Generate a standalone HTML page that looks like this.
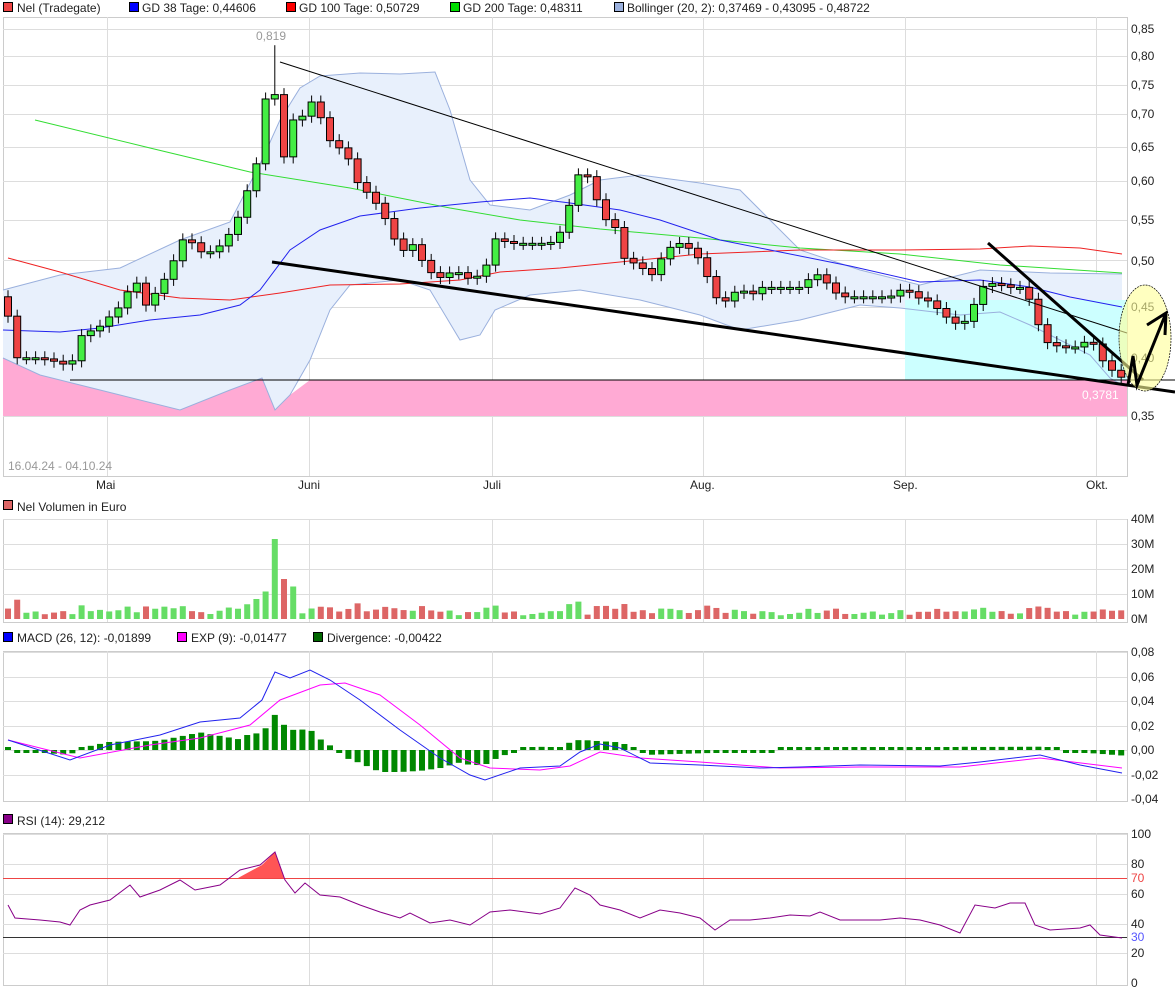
<!DOCTYPE html>
<html><head><meta charset="utf-8"><style>
body{margin:0;background:#fff;width:1175px;height:994px;overflow:hidden;font-family:"Liberation Sans",sans-serif}
svg{display:block}
text{font-family:"Liberation Sans",sans-serif;font-size:12px;fill:#222}
</style></head><body>
<svg id="s" width="1175" height="994" viewBox="0 0 1175 994" xmlns="http://www.w3.org/2000/svg">
<g id="bg"></g>
<!-- legends -->
<rect x="3.5" y="2.5" width="9" height="9" fill="#e44" stroke="#000"/><text x="17" y="12">Nel (Tradegate)</text>
<rect x="129.5" y="2.5" width="9" height="9" fill="#00f" stroke="#000"/><text x="142" y="12">GD 38 Tage: 0,44606</text>
<rect x="286.5" y="2.5" width="9" height="9" fill="#f00" stroke="#000"/><text x="299" y="12">GD 100 Tage: 0,50729</text>
<rect x="450.5" y="2.5" width="9" height="9" fill="#0d0" stroke="#000"/><text x="463" y="12">GD 200 Tage: 0,48311</text>
<rect x="614.5" y="2.5" width="9" height="9" fill="#9ab0dd" stroke="#000"/><text x="627" y="12">Bollinger (20, 2): 0,37469 - 0,43095 - 0,48722</text>
<rect x="3.5" y="500.5" width="9" height="9" fill="#d66" stroke="#000"/><text x="17" y="511">Nel Volumen in Euro</text>
<rect x="3.5" y="632.5" width="9" height="9" fill="#00f" stroke="#000"/><text x="17" y="642">MACD (26, 12): -0,01899</text>
<rect x="177.5" y="632.5" width="9" height="9" fill="#f0f" stroke="#000"/><text x="191" y="642">EXP (9): -0,01477</text>
<rect x="313.5" y="632.5" width="9" height="9" fill="#060" stroke="#000"/><text x="327" y="642">Divergence: -0,00422</text>
<rect x="3.5" y="814.5" width="9" height="9" fill="#808" stroke="#000"/><text x="17" y="825">RSI (14): 29,212</text>
<!-- axis labels -->
<g font-size="12">
<text x="1131" y="33">0,85</text><text x="1131" y="60">0,80</text><text x="1131" y="89">0,75</text><text x="1131" y="118">0,70</text><text x="1131" y="151">0,65</text><text x="1131" y="185">0,60</text><text x="1131" y="224">0,55</text><text x="1131" y="265">0,50</text><text x="1131" y="311">0,45</text><text x="1131" y="362">0,40</text><text x="1131" y="420">0,35</text>
<text x="96" y="489">Mai</text><text x="298" y="489">Juni</text><text x="483" y="489">Juli</text><text x="690" y="489">Aug.</text><text x="893" y="489">Sep.</text><text x="1086" y="489">Okt.</text>
<text x="8" y="470" fill="#999" style="fill:#999">16.04.24 - 04.10.24</text>
<text x="256" y="40" style="fill:#999">0,819</text>
<text x="1131" y="523">40M</text><text x="1131" y="548">30M</text><text x="1131" y="573">20M</text><text x="1131" y="598">10M</text><text x="1131" y="623">0M</text>
<text x="1131" y="656">0,08</text><text x="1131" y="681">0,06</text><text x="1131" y="705">0,04</text><text x="1131" y="730">0,02</text><text x="1131" y="754">0,00</text><text x="1131" y="779">-0,02</text><text x="1131" y="803">-0,04</text>
<text x="1131" y="838">100</text><text x="1131" y="868">80</text><text x="1131" y="882" style="fill:#e44">70</text><text x="1131" y="898">60</text><text x="1131" y="928">40</text><text x="1131" y="941" style="fill:#55f">30</text><text x="1131" y="957">20</text><text x="1131" y="987">0</text>
</g>
<g id="fg"></g>
</svg>
<script>
var NS="http://www.w3.org/2000/svg";
function el(p,t,a){var e=document.createElementNS(NS,t);for(var k in a)e.setAttribute(k,a[k]);document.getElementById(p).appendChild(e);return e;}
function interp(pts,x){if(x<=pts[0][0])return pts[0][1];for(var i=1;i<pts.length;i++){if(x<=pts[i][0]){var a=pts[i-1],b=pts[i];return a[1]+(b[1]-a[1])*(x-a[0])/(b[0]-a[0]);}}return pts[pts.length-1][1];}
function py(p){return 29+(-Math.log(p)-0.1625)*436.1;}
function path(pts,f){return pts.map(function(q,i){return (i?"L":"M")+q[0]+","+(f?f(q[1]):q[1]);}).join("");}
// panels & grid
var vx=[107,309,492,703,905,1096];
function panel(y0,y1,hs){el("bg","rect",{x:3.5,y:y0+.5,width:1124,height:y1-y0,fill:"#fff",stroke:"#ccc"});
hs.forEach(function(h){el("bg","line",{x1:3,x2:1127,y1:h+.5,y2:h+.5,stroke:"#ddd"});});
vx.forEach(function(v){el("bg","line",{x1:v+.5,x2:v+.5,y1:y0,y2:y1,stroke:"#ddd"});});}
panel(17,476,[29,56,85,114,147,181,220,260,307,358,416]);
panel(519,622,[519,544,569,594]);
panel(651,801,[652,677,701,726,750,775]);
panel(833,985,[834,864,894,924,953]);
// bollinger
var up=[[3,290],[60,275],[120,268],[180,240],[230,222],[262,160],[280,120],[300,88],[320,76],[360,73],[400,74],[435,72],[450,110],[470,180],[490,205],[530,210],[570,195],[600,180],[640,175],[700,183],[740,190],[770,220],[800,250],[860,270],[920,285],[980,270],[1050,273],[1122,274]];
var lo=[[3,358],[40,375],[80,385],[120,395],[180,410],[230,390],[262,378],[275,410],[290,395],[310,360],[330,310],[350,285],[400,280],[430,290],[445,315],[460,340],[480,335],[495,310],[530,295],[580,290],[640,300],[700,315],[740,330],[800,320],[860,305],[900,308],[960,315],[1000,312],[1030,325],[1060,340],[1090,355],[1110,378],[1122,385]];
var pk=[[3,358],[40,375],[80,385],[120,395],[180,410],[230,390],[262,378],[275,410],[290,395],[310,380],[1127,380]];
el("bg","path",{d:path(pk)+"L1127,416L3,416Z",fill:"#ffaad4"});
el("bg","path",{d:path(up)+"L"+lo.slice().reverse().map(function(q){return q[0]+","+q[1]}).join("L")+"Z",fill:"#e8f0fc"});
el("bg","path",{d:"M905,300L1127,300L1127,380L905,380Z",fill:"#ccffff"});
el("bg","path",{d:path(up),fill:"none",stroke:"#9ab0dd"});
el("bg","path",{d:path(lo),fill:"none",stroke:"#9ab0dd"});
// MAs
el("bg","path",{d:path([[35,120],[150,148],[250,172],[350,188],[450,208],[520,220],[600,229],[700,238],[800,248],[900,254],[1000,265],[1122,273]]),fill:"none",stroke:"#3d3"});
el("bg","path",{d:path([[8,258],[60,272],[120,290],[180,298],[230,300],[280,293],[330,285],[400,284],[460,280],[500,272],[560,268],[620,262],[700,254],[800,250],[900,250],[980,249],[1030,246],[1080,248],[1122,254]]),fill:"none",stroke:"#e22"});
el("bg","path",{d:path([[3,330],[60,332],[100,328],[150,320],[200,315],[240,305],[260,290],[290,250],[320,230],[360,216],[420,208],[480,202],[530,198],[570,203],[620,210],[660,220],[720,240],[780,252],[850,266],[920,282],[980,280],[1030,287],[1070,297],[1122,307]]),fill:"none",stroke:"#22e"});
// candles
var kp=[[8,.44],[15,.40],[40,.40],[62,.395],[70,.39],[80,.42],[100,.43],[120,.45],[135,.48],[145,.45],[160,.47],[170,.49],[185,.53],[200,.51],[215,.51],[235,.54],[245,.58],[255,.61],[262,.68],[271,.79],[282,.62],[292,.69],[300,.69],[312,.72],[322,.69],[332,.65],[345,.645],[356,.60],[370,.58],[382,.56],[392,.53],[402,.51],[412,.52],[422,.50],[432,.485],[442,.48],[455,.49],[465,.48],[475,.48],[485,.49],[497,.53],[507,.52],[520,.52],[535,.52],[550,.52],[565,.54],[575,.605],[585,.615],[595,.58],[605,.55],[615,.54],[625,.50],[640,.495],[650,.48],[660,.50],[670,.515],[680,.52],[695,.51],[708,.48],[720,.45],[730,.46],[740,.47],[750,.46],[760,.47],[780,.47],[800,.47],[810,.48],[820,.485],[830,.47],[840,.46],[850,.46],[870,.46],[890,.46],[905,.47],[915,.46],[930,.455],[945,.44],[960,.43],[970,.44],[980,.47],[995,.475],[1010,.47],[1025,.47],[1035,.44],[1045,.415],[1060,.41],[1080,.41],[1090,.42],[1100,.40],[1110,.39],[1122,.382]];
var prev=.46,vols=[],ups=[];
for(var i=0;i<122;i++){var x=8+i*9.2,c=interp(kp,x),o=prev;prev=c;
var u=c>=o;ups.push(u);var t=py(Math.max(o,c)),b=py(Math.min(o,c));if(b-t<2){b=t+2;}
var hi=py(Math.max(o,c)*1.015),lw=py(Math.min(o,c)*0.985);
if(i==29){hi=py(.819);}
el("fg","line",{x1:x,x2:x,y1:hi,y2:lw,stroke:"#000"});
el("fg","rect",{x:x-3.5,y:t,width:7,height:b-t,fill:u?"#4e4":"#e44",stroke:"#000","stroke-width":1});
var v=1.5+Math.abs(Math.log(c/o))*60+((i*37)%7)*0.25;
if(x>255&&x<300){v=[8,11,32,16,13,9][Math.round((x-255)/9.2)]||8;}
vols.push([x,v,u]);}
vols.forEach(function(q){var h=Math.min(q[1],40)*2.5;el("fg","rect",{x:q[0]-3,y:619-h,width:6,height:h,fill:q[2]?"#6d6":"#d66"});});
// trend lines
el("fg","line",{x1:280,y1:62,x2:1127,y2:333,stroke:"#000"});
el("fg","line",{x1:272,y1:262,x2:1175,y2:392,stroke:"#000","stroke-width":3});
el("fg","line",{x1:70,y1:380,x2:1175,y2:380,stroke:"#000"});
el("fg","line",{x1:988,y1:243,x2:1143,y2:380,stroke:"#000","stroke-width":3});
el("fg","ellipse",{cx:1145,cy:338,rx:26,ry:53,fill:"rgba(255,255,150,.6)",stroke:"#000","stroke-width":.7,"stroke-dasharray":"2,1"});
el("fg","path",{d:"M1128,385L1133,356L1137,385L1166,313M1147,325L1166,313L1165,335",fill:"none",stroke:"#000","stroke-width":3});
var tx=el("fg","text",{x:1082,y:399,style:"fill:#fff"});tx.textContent="0,3781";
// MACD
var bl=[[8,740],[70,760],[110,745],[160,735],[200,722],[240,718],[262,700],[275,672],[290,678],[310,670],[330,680],[360,700],[400,730],[440,758],[470,775],[485,780],[520,768],[560,766],[580,752],[600,744],[620,748],[650,763],[700,765],[760,768],[800,767],[860,765],[940,766],[980,762],[1040,755],[1080,765],[1122,773]];
var mg=[[8,740],[80,758],[150,745],[200,738],[250,725],[280,700],[320,685],[345,683],[380,695],[420,725],[460,758],[490,768],[540,770],[570,766],[600,752],[640,758],[700,762],[780,768],[860,767],[960,767],[1040,758],[1122,768]];
for(var i=0;i<122;i++){var x=8+i*9.2,d=(interp(mg,x)-interp(bl,x))*1.1;if(Math.abs(d)<3)d=d<0?-3:3;
el("fg","rect",{x:x-3,y:d>0?750-d:750,width:6,height:Math.abs(d),fill:"#080"});}
el("fg","path",{d:path(mg),fill:"none",stroke:"#f0f"});
el("fg","path",{d:path(bl),fill:"none",stroke:"#22e"});
// RSI
el("fg","path",{d:"M238,878L262,865L275,852L284,878Z",fill:"#f55"});
el("fg","line",{x1:3,x2:1127,y1:878.5,y2:878.5,stroke:"#e44"});
el("fg","line",{x1:3,x2:1127,y1:937.5,y2:937.5,stroke:"#333"});
var rs=[[8,905],[15,918],[40,920],[60,922],[70,925],[80,910],[90,905],[110,900],[130,885],[140,897],[160,890],[180,880],[195,890],[220,885],[240,870],[260,865],[275,852],[285,880],[295,893],[305,883],[320,895],[340,897],[360,905],[380,912],[400,918],[410,913],[430,923],[450,920],[470,925],[490,912],[510,910],[540,914],[560,908],[575,888],[590,895],[600,905],[620,910],[640,918],[660,910],[680,913],[700,918],[715,930],[730,920],[750,920],[770,918],[790,915],[810,916],[820,912],[840,920],[880,920],[900,918],[920,920],[940,925],[960,933],[975,905],[995,908],[1010,903],[1025,903],[1035,925],[1050,930],[1080,928],[1090,925],[1100,935],[1122,938]];
el("fg","path",{d:path(rs),fill:"none",stroke:"#808"});
</script>
</body></html>
